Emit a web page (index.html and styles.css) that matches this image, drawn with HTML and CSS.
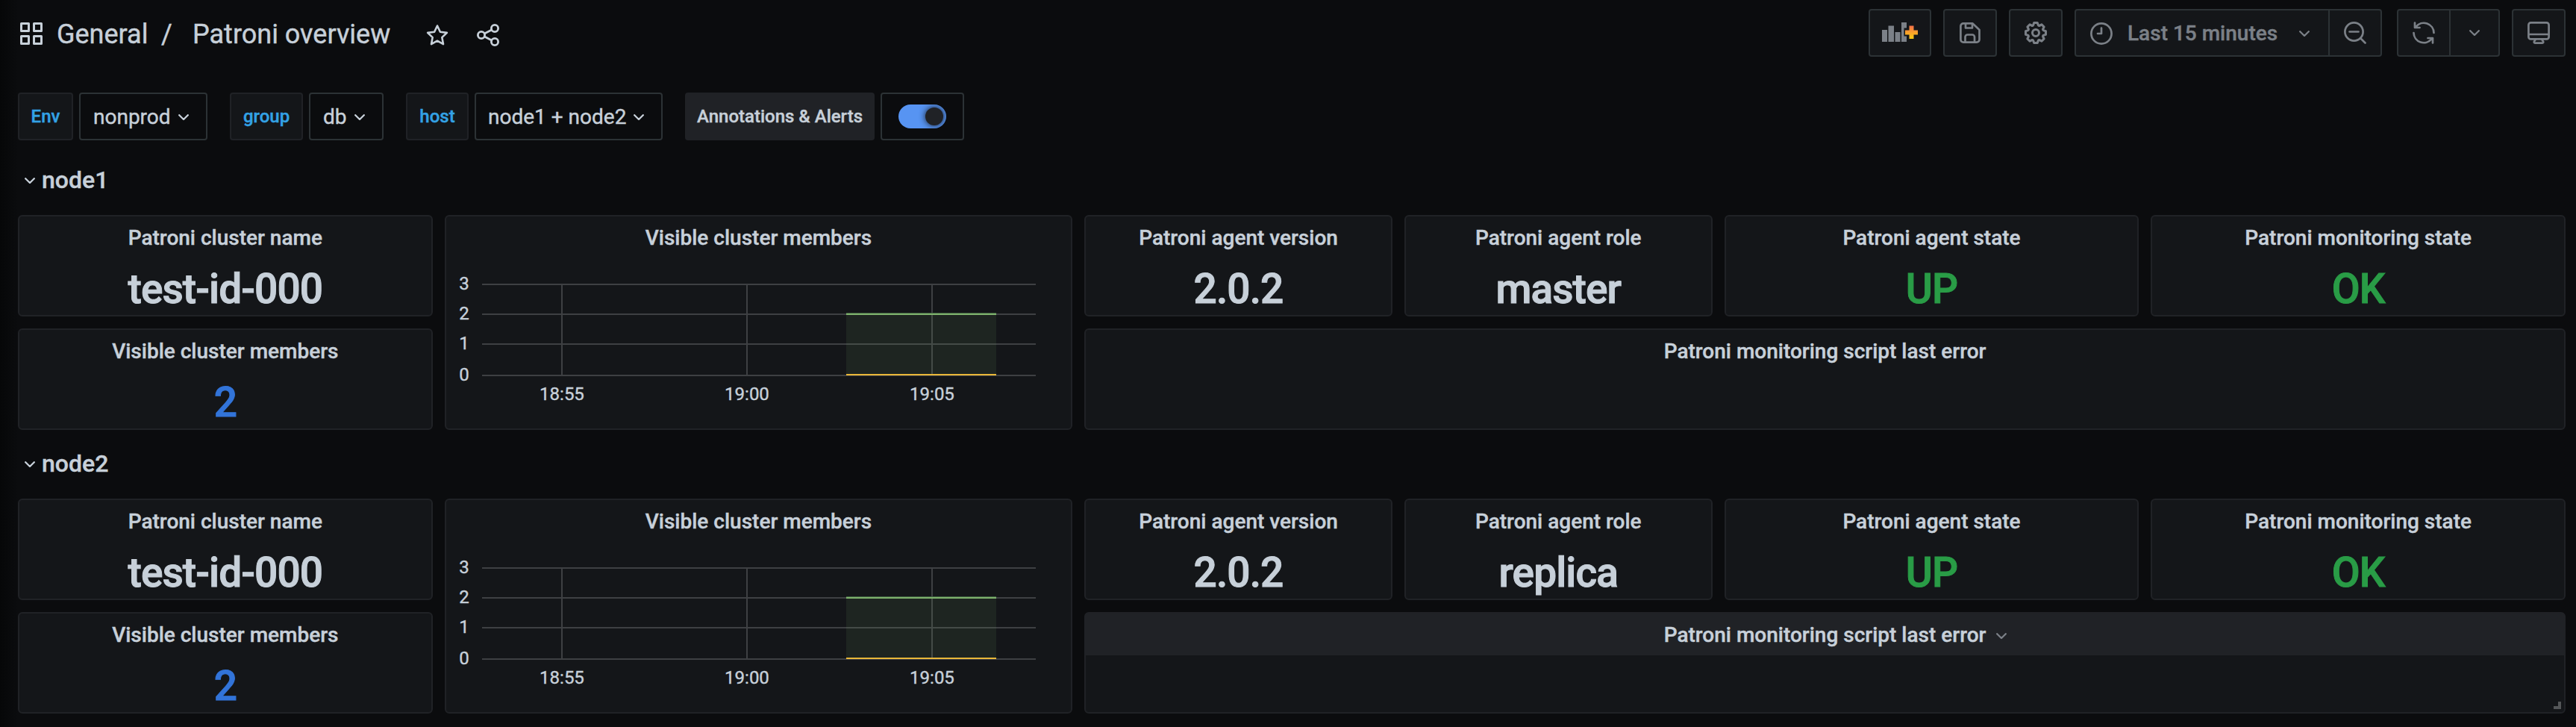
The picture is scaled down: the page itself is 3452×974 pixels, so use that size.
FILE: index.html
```
<!DOCTYPE html>
<html lang="en">
<head>
<meta charset="utf-8">
<title>Patroni overview</title>
<link rel="stylesheet" href="styles.css">
</head>
<body>
<svg class="defs" aria-hidden="true">
  <symbol id="chevron" viewBox="0 0 14 8"><path d="M1.2 1.2 7 7l5.800-5.800" fill="none" stroke="currentColor" stroke-width="2.300" stroke-linecap="round" stroke-linejoin="round"/></symbol>
  <symbol id="chart" viewBox="0 0 748 155">
    <g fill="#3e4043">
      <rect x="6" y="26" width="742" height="2"/><rect x="6" y="66" width="742" height="2"/><rect x="6" y="106" width="742" height="2"/><rect x="6" y="148" width="742" height="2"/>
      <rect x="112" y="26" width="2" height="122"/><rect x="360" y="26" width="2" height="122"/><rect x="608" y="26" width="2" height="122"/>
    </g>
    <rect x="494" y="66" width="201" height="82" fill="#7eb26d" fill-opacity=".1"/>
    <rect x="494" y="65" width="201" height="1" fill="#416040"/><rect x="494" y="66" width="201" height="2" fill="#7eb26d"/>
    <rect x="494" y="147" width="201" height="2" fill="#eab839"/>
  </symbol>
</svg>
<header class="topbar">
  <div class="crumbs">
    <svg class="i-apps" viewBox="0 0 30 30"><path d="M1.500 1.500h10v10h-10zM18.500 1.500h10v10h-10zM1.500 18.500h10v10h-10zM18.500 18.500h10v10h-10z" fill="none" stroke="currentColor" stroke-width="3" stroke-linejoin="round"/></svg>
    <span class="folder">General</span><span class="slash">/</span><span class="name">Patroni overview</span>
    <svg class="i-star" viewBox="0 0 30 30"><path d="M15 2.500l3.900 8.200 9 1.200-6.600 6.200 1.700 9L15 22.700l-8 4.400 1.700-9-6.600-6.200 9-1.200z" fill="none" stroke="currentColor" stroke-width="2.600" stroke-linejoin="round"/></svg>
    <svg class="i-share" viewBox="0 0 30 30"><g fill="none" stroke="currentColor" stroke-width="2.800"><circle cx="6" cy="15" r="4.600"/><circle cx="24" cy="6" r="4.600"/><circle cx="24" cy="24" r="4.600"/><path d="M10.200 13l9.600-4.900M10.200 17l9.600 4.900"/></g></svg>
  </div>
  <div class="tools">
    <button class="tool add"><svg width="48" height="28" viewBox="0 0 48 28"><defs><linearGradient id="plus" x1="0" y1="0" x2="0" y2="1"><stop offset="0" stop-color="#f2704a"/><stop offset=".5" stop-color="#faa02c"/><stop offset="1" stop-color="#f9ca12"/></linearGradient></defs><path d="M0 10h7v16H0zM8.500 4.500h7.500V26H8.500zM17.500 13h7v13h-7zM26 0h7v7.500h-3.500v11H33V26h-7z" fill="currentColor"/><path d="M36.500 4.500h6v6H48v6h-5.500V22h-6v-5.500H31v-6h5.500z" fill="url(#plus)"/></svg></button>
    <button class="tool"><svg width="28" height="28" viewBox="0 0 28 28"><g fill="none" stroke="currentColor" stroke-width="2.700" stroke-linejoin="round"><path d="M5 1.400h12.500L26.500 10v13a3.600 3.600 0 0 1-3.600 3.600H5A3.600 3.600 0 0 1 1.400 23V5A3.600 3.600 0 0 1 5 1.400z"/><path d="M8 1.500v6h9v-6M7.500 26.500v-7a3 3 0 0 1 3-3h6.500a3 3 0 0 1 3 3v7"/></g></svg></button>
    <button class="tool"><svg width="36" height="36" viewBox="0 0 24 24"><path fill="currentColor" d="M21.320 9.550l-1.890-.63.890-1.780A1 1 0 0 0 20.130 6L18 3.870a1 1 0 0 0-1.150-.19l-1.780.89-.63-1.890A1 1 0 0 0 13.500 2h-3a1 1 0 0 0-.95.680l-.63 1.890-1.780-.89A1 1 0 0 0 6 3.870L3.870 6a1 1 0 0 0-.19 1.150l.89 1.780-1.890.63a1 1 0 0 0-.68.940v3a1 1 0 0 0 .68.950l1.890.63-.89 1.780A1 1 0 0 0 3.870 18L6 20.130a1 1 0 0 0 1.150.19l1.780-.89.63 1.890a1 1 0 0 0 .95.680h3a1 1 0 0 0 .95-.68l.63-1.890 1.780.89a1 1 0 0 0 1.130-.19L20.130 18a1 1 0 0 0 .19-1.150l-.89-1.780 1.890-.63a1 1 0 0 0 .68-.94v-3a1 1 0 0 0-.68-.95zM20 12.780l-1.200.4a2 2 0 0 0-1.220 2.820l.57 1.140-1.100 1.100-1.050-.66a2 2 0 0 0-2.820 1.220l-.4 1.200h-1.560l-.4-1.200A2 2 0 0 0 8 17.580l-1.140.57-1.100-1.100.66-1.050a2 2 0 0 0-1.220-2.820l-1.200-.4v-1.560l1.200-.4A2 2 0 0 0 6.420 8l-.57-1.110 1.100-1.100L8 6.420a2 2 0 0 0 2.820-1.220l.4-1.200h1.560l.4 1.200A2 2 0 0 0 16 6.420l1.140-.57 1.100 1.100-.66 1.050a2 2 0 0 0 1.220 2.820l1.200.4zM12 8a4 4 0 1 0 0 8 4 4 0 0 0 0-8zm0 6a2 2 0 1 1 0-4 2 2 0 0 1 0 4z"/></svg></button>
    <div class="group time">
      <button class="range"><svg width="30" height="30" viewBox="0 0 30 30"><g fill="none" stroke="currentColor" stroke-width="2.700" stroke-linecap="round" stroke-linejoin="round"><circle cx="15" cy="15" r="13.600"/><path d="M15 7.500V15h-5"/></g></svg><span>Last 15 minutes</span><svg class="chev"><use href="#chevron"/></svg></button>
      <button class="zoom"><svg width="30" height="30" viewBox="0 0 30 30"><g fill="none" stroke="currentColor" stroke-width="2.700" stroke-linecap="round"><circle cx="13.500" cy="13.500" r="12.100"/><path d="M7.500 13.500h12M22.500 22.500l6 6"/></g></svg></button>
    </div>
    <div class="group refresh">
      <button class="sync"><svg width="30" height="30" viewBox="0 0 30 30"><g fill="none" stroke="currentColor" stroke-width="2.700" stroke-linecap="round" stroke-linejoin="round"><path d="M28.500 15A13.500 13.500 0 0 0 4.500 6.800M3 1.500v6.500h6.500M1.500 15a13.500 13.500 0 0 0 24 8.200M27 28.500V22h-6.500"/></g></svg></button>
      <button class="interval"><svg class="chev"><use href="#chevron"/></svg></button>
    </div>
    <button class="tool monitor"><svg width="30" height="30" viewBox="0 0 30 30"><g fill="none" stroke="currentColor" stroke-width="2.700" stroke-linejoin="round"><rect x="1.400" y="1.400" width="27.200" height="22" rx="3"/><path d="M1.400 17h27.200M11 23.500l-2 3a1.300 1.300 0 0 0 1 2.100h10a1.300 1.300 0 0 0 1-2.100l-2-3"/></g></svg></button>
  </div>
</header>
<nav class="filters">
  <div class="filter"><label class="w-env">Env</label><div class="select w-nonprod">nonprod<svg class="chev"><use href="#chevron"/></svg></div></div>
  <div class="filter"><label class="w-group">group</label><div class="select w-db">db<svg class="chev"><use href="#chevron"/></svg></div></div>
  <div class="filter"><label class="w-host">host</label><div class="select w-nodes">node1 + node2<svg class="chev"><use href="#chevron"/></svg></div></div>
  <div class="filter"><div class="annot">Annotations &amp; Alerts</div><div class="switchbox"><span class="switch"><i></i></span></div></div>
</nav>
<main>
  <section>
    <h2><svg class="chev"><use href="#chevron"/></svg>node1</h2>
    <div class="grid">
      <article class="panel c4"><h3>Patroni cluster name</h3><p>test-id-000</p></article>
      <article class="panel c6 tall"><h3>Visible cluster members</h3>
        <div class="graph"><div class="ys"><span>3</span><span>2</span><span>1</span><span>0</span></div><div class="plot"><svg class="chart"><use href="#chart"/></svg><div class="xs"><span>18:55</span><span>19:00</span><span>19:05</span></div></div></div></article>
      <article class="panel c3"><h3>Patroni agent version</h3><p>2.0.2</p></article>
      <article class="panel c3"><h3>Patroni agent role</h3><p>master</p></article>
      <article class="panel c4"><h3>Patroni agent state</h3><p class="green">UP</p></article>
      <article class="panel c4"><h3>Patroni monitoring state</h3><p class="green">OK</p></article>
      <article class="panel c4"><h3>Visible cluster members</h3><p class="blue">2</p></article>
      <article class="panel c14"><h3>Patroni monitoring script last error</h3></article>
    </div>
  </section>
  <section>
    <h2><svg class="chev"><use href="#chevron"/></svg>node2</h2>
    <div class="grid">
      <article class="panel c4"><h3>Patroni cluster name</h3><p>test-id-000</p></article>
      <article class="panel c6 tall"><h3>Visible cluster members</h3>
        <div class="graph"><div class="ys"><span>3</span><span>2</span><span>1</span><span>0</span></div><div class="plot"><svg class="chart"><use href="#chart"/></svg><div class="xs"><span>18:55</span><span>19:00</span><span>19:05</span></div></div></div></article>
      <article class="panel c3"><h3>Patroni agent version</h3><p>2.0.2</p></article>
      <article class="panel c3"><h3>Patroni agent role</h3><p>replica</p></article>
      <article class="panel c4"><h3>Patroni agent state</h3><p class="green">UP</p></article>
      <article class="panel c4"><h3>Patroni monitoring state</h3><p class="green">OK</p></article>
      <article class="panel c4"><h3>Visible cluster members</h3><p class="blue">2</p></article>
      <article class="panel c14 hover"><h3>Patroni monitoring script last error<svg class="chev menu"><use href="#chevron"/></svg></h3><span class="resize"></span></article>
    </div>
  </section>
</main>
</body>
</html>
```
FILE: styles.css
```
* { box-sizing: border-box; margin: 0; padding: 0; }
body { width: 3452px; height: 974px; overflow: hidden; background: linear-gradient(90deg, #060708 0, #0b0c0e 24px); color: #c7d0d9; font: 400 28px/1.5 Roboto, sans-serif; -webkit-text-stroke: .4px currentColor; }
button { font: inherit; color: inherit; background: none; border: 0; display: flex; align-items: center; justify-content: center; }
svg { display: block; flex: none; }
.defs { width: 0; height: 0; position: absolute; }
.chev { width: 14px; height: 8px; }

.topbar { display: flex; justify-content: space-between; height: 124px; padding: 12px 14px 0 27px; }
.crumbs { display: flex; align-items: center; height: 66px; font-size: 36px; white-space: nowrap; padding-top: 1px; }
.crumbs svg { width: 30px; height: 30px; }
.crumbs .i-apps { margin-top: -2px; }
.folder { margin-left: 19px; width: 140px; }
.slash { width: 42px; }
.name { width: 313px; }
.i-star { margin-top: 2px; }
.i-share { margin: 2px 0 0 38px; }

.tools { display: flex; height: 64px; color: #7b8087; }
.tool, .group { height: 64px; background: #141619; border: 2px solid #2c3235; border-radius: 4px; }
.tool { width: 72px; margin-right: 16px; }
.add { width: 84px; }
.monitor { margin-right: 0; }
.group { display: flex; }
.group button { height: 60px; }
.group button + button { border-left: 2px solid #2c3235; }
.time { width: 412px; margin-right: 20px; }
.range { width: 338px; flex: none; justify-content: flex-start; padding: 1px 0 0 19px; font-weight: 500; }
.range span { width: 230px; margin-left: 20px; text-align: left; white-space: nowrap; }
.zoom { width: 70px; }
.refresh { width: 138px; margin-right: 16px; }
.sync { width: 68px; }
.interval { width: 66px; }

.filters { display: flex; gap: 30px; padding-left: 24px; height: 64px; }
.filter { display: flex; gap: 8px; }
.filter label, .annot { height: 64px; border-radius: 4px; font-size: 24px; font-weight: 500; display: flex; align-items: center; justify-content: center; white-space: nowrap; }
.filter label { background: #141619; border: 2px solid #202226; color: #33a2e5; }
.annot { width: 254px; background: #202226; }
.select { height: 64px; border: 2px solid #2c3235; border-radius: 4px; padding: 1px 0 0 17px; display: flex; align-items: center; gap: 10px; white-space: nowrap; }
.w-env { width: 74px; }
.w-nonprod { width: 172px; }
.w-group { width: 98px; }
.w-db { width: 100px; }
.w-host { width: 84px; }
.w-nodes { width: 252px; padding-left: 16px; }
.switchbox { width: 112px; border: 2px solid #2c3235; border-radius: 4px; display: flex; align-items: center; justify-content: center; }
.switch { width: 64px; height: 32px; border-radius: 16px; background: #5794f2; padding: 4px; display: flex; justify-content: flex-end; overflow: hidden; }
.switch i { width: 24px; height: 24px; border-radius: 50%; background: #202226; box-shadow: 0 0 8px #141619; }

h2 { height: 100px; padding: 28px 0 0 33px; display: flex; align-items: flex-start; gap: 9px; font-size: 32px; line-height: 50px; font-weight: 500; }
h2 .chev { margin-top: 22px; }
.grid { display: grid; grid-template-columns: repeat(24, minmax(0, 1fr)); grid-template-rows: 136px 136px; gap: 16px; padding: 0 14px 0 24px; }
section + section h2 { height: 92px; padding-top: 20px; }
.panel { background: #141619; border: 2px solid #202226; border-radius: 6px; position: relative; text-align: center; white-space: nowrap; }
.c3 { grid-column: span 3; }
.c4 { grid-column: span 4; }
.c6 { grid-column: span 6; }
.c14 { grid-column: span 14; }
.tall { grid-row: span 2; }
h3 { height: 56px; font-size: 28px; line-height: 58px; font-weight: 500; }
.panel p { font-size: 55px; line-height: 82px; font-weight: 500; letter-spacing: -.9px; -webkit-text-stroke-width: 1px; }
.green { color: #299c46; }
.blue { color: #3274d9; }
.hover h3 { background: #202226; }
.menu { position: absolute; top: 26px; left: calc(50% + 229px); color: #7b8087; }
.resize { position: absolute; right: 4px; bottom: 4px; width: 10px; height: 10px; border-right: 4px solid #545658; border-bottom: 4px solid #545658; }

.graph { display: flex; font-size: 24px; padding-top: 8px; }
.ys { width: 31px; margin-right: 11.33px; text-align: right; line-height: 40px; padding-top: 6px; }
.ys span { display: block; }
.ys span:last-child { padding-top: 2px; }
.plot { width: 748px; }
.chart { width: 748px; height: 155px; shape-rendering: crispEdges; }
.xs { display: flex; width: 744px; margin-left: -11px; line-height: 36px; padding-top: 1px; }
.xs span { width: 248px; }
```
